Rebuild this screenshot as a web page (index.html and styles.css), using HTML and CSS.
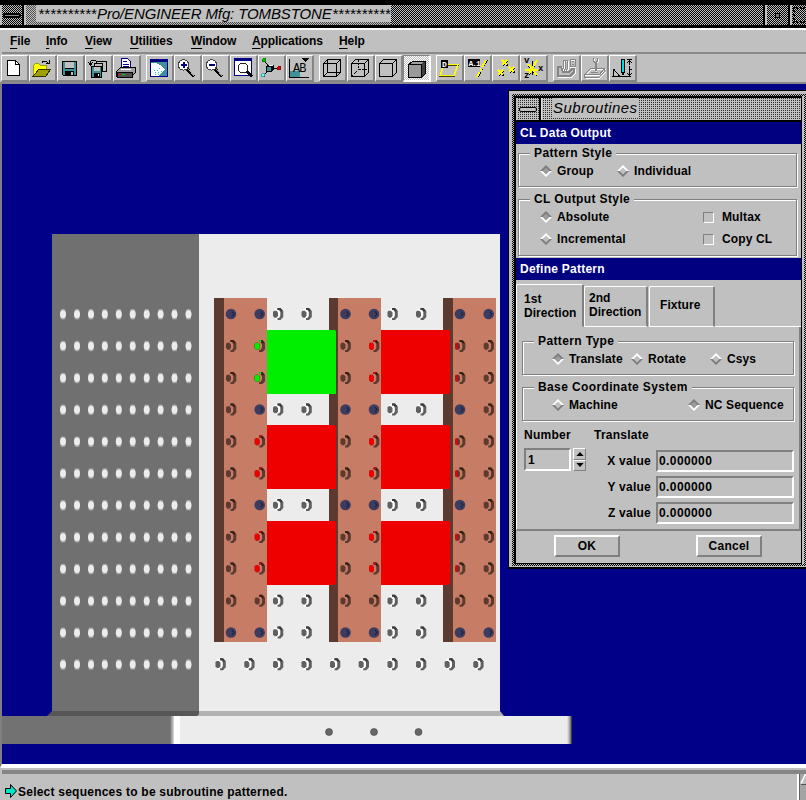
FILE: index.html
```html
<!DOCTYPE html>
<html lang="en">
<head>
<meta charset="utf-8">
<title>Pro/ENGINEER Mfg: TOMBSTONE</title>
<link rel="stylesheet" href="styles.css">
</head>
<body>
<div class="app">
  <header class="titlebar">
    <div class="sysbtn"><span></span></div>
    <div class="spacer"></div>
    <div class="apptitle"><span class="stars">**********</span><span class="name">Pro/ENGINEER Mfg: TOMBSTONE</span><span class="stars">**********</span></div>
    <div class="grip"></div>
    <div class="minbtn"><i></i></div>
    <div class="maxbtn"><i></i></div>
  </header>

  <nav class="menubar">
    <span><u>F</u>ile</span><span><u>I</u>nfo</span><span><u>V</u>iew</span><span><u>U</u>tilities</span><span><u>W</u>indow</span><span><u>A</u>pplications</span><span><u>H</u>elp</span>
  </nav>

  <div class="toolbar">
    <div class="tools">
      <button class="tool"><svg viewBox="1 55 27 27"><path d="M7.500 60.500h8l4 4v11h-12z" fill="#fff" stroke="#000"/><path d="M15.500 60.500v4h4" fill="none" stroke="#000"/></svg></button>
      <button class="tool"><svg viewBox="29 55 27 27"><path d="M33.500 75.500v-10l2-2h3l2 2h6v4" fill="#ff0" stroke="#a0a000"/><path d="M33.500 76l5-6.500h12l-4.500 6.500z" fill="#a0a000" stroke="#303000"/><path d="M41.500 63.500c1-3 5-3 7 0M46 63.500h3.500v-3.500" fill="none" stroke="#000"/></svg></button>
      <button class="tool"><svg viewBox="57 55 27 27"><path d="M62.500 61.500h14v14h-13l-1-1z" fill="#40909c" stroke="#000"/><path d="M65 62h9v6h-9z" fill="#c0c0c0"/><path d="M65 68h9v1h-9zM65 71h9v5h-9z"/><path d="M71 72h2v3h-2z" fill="#c0c0c0"/></svg></button>
      <button class="tool"><svg viewBox="85 55 27 27"><path d="M96.500 61.500h10v10h-10z" fill="#c0c0c0" stroke="#000"/><path d="M94.500 63.500h8v8h-8z" fill="#c0c0c0" stroke="#000"/><path d="M91.500 66.500h10v11h-10z" fill="#40909c" stroke="#000"/><path d="M93.500 67h6v4h-6z" fill="#c0c0c0"/><path d="M93.500 73h6v4h-6z"/><path d="M98 74h1v2h-1z" fill="#fff"/><path d="M95.500 60.500h-3q-2 0-2 2v3M88.500 62.500l2 3 2-3" fill="none" stroke="#000"/></svg></button>
      <button class="tool"><svg viewBox="113 55 27 27"><path d="M121.500 58.500h6l3 3v9h-9z" fill="#fff" stroke="#008"/><path d="M123 61.500h4M123 64.500h6M123 66.500h6" stroke="#008"/><path d="M116.500 71.500l4-4h15v5l-4 4h-15z" fill="#a0a0a0" stroke="#000"/><path d="M117 72h15v5h-15z" fill="#505050" stroke="#000"/><path d="M121 69.500h10" stroke="#fff"/><path d="M119 74h2v1h-2z" fill="#f00"/><path d="M122 74h3v1h-3z" fill="#0d0"/></svg></button>
    </div>
    <div class="tools">
      <button class="tool"><svg viewBox="146 55 27 27"><path d="M150.500 59.500h17v17h-17z" fill="#40909c" stroke="#000080"/><path d="M150 59h18v3h-18z" fill="#000080"/><path d="M151 63h5q7 3 9 7l-7 6h-7z" fill="#fff"/><path d="M154 70.500h1m2 0h1m-3 2h1m2 0h1m-4 2h1m2 0h1m0-6h1m1 3h1" stroke="#0dd"/></svg></button>
      <button class="tool"><svg viewBox="174 55 27 27"><path d="M187 69l7 7.500" stroke="#000" stroke-width="3"/><path d="M187 68l7 7.500" stroke="#aaa"/><circle cx="183.500" cy="65" r="5.200" fill="#fff" stroke="#404040"/><path d="M180.500 64h6v2h-6zM182.500 62h2v6h-2z" fill="#000080"/></svg></button>
      <button class="tool"><svg viewBox="202 55 27 27"><path d="M215 69l7 7.500" stroke="#000" stroke-width="3"/><path d="M215 68l7 7.500" stroke="#aaa"/><circle cx="211.500" cy="65" r="5.200" fill="#fff" stroke="#404040"/><path d="M208.500 64h6v2h-6z" fill="#000080"/></svg></button>
      <button class="tool"><svg viewBox="230 55 27 27"><path d="M234.500 58.500h17v17h-17z" fill="#fff" stroke="#000080"/><path d="M234 58h18v3h-18z" fill="#000080"/><path d="M246 71l6 5.500" stroke="#000" stroke-width="3"/><circle cx="243" cy="68" r="5" fill="#fff" stroke="#202020"/></svg></button>
      <button class="tool"><svg viewBox="258 55 27 27"><path d="M264 61l5 5M264 75l4-4M273 68h5" stroke="#000"/><path d="M266 66.500l2-2h6v5l-2 2h-6z"/><path d="M267 67h4v4h-4z" fill="#40909c"/><path d="M269 65h4l-1 1h-4z" fill="#fff"/><circle cx="264" cy="60" r="2" fill="#0c0" stroke="#040" stroke-width=".5"/><circle cx="279" cy="68" r="2" fill="#e00" stroke="#400" stroke-width=".5"/><circle cx="263" cy="75" r="2" fill="#7ff" stroke="#044" stroke-width=".5"/></svg></button>
      <button class="tool"><svg viewBox="286 55 27 27"><path d="M290 71h10v7h-10z" fill="#40909c"/><path d="M289.500 59v18.500h19" fill="none" stroke="#000"/><path d="M301 58h9l-4.500 4z"/><text x="293" y="72" class="mono ab">AB</text></svg></button>
    </div>
    <div class="tools">
      <button class="tool"><svg viewBox="319 55 27 27"><path d="M323.500 63.500h13v13h-13zM327.500 59.500h13v13h-13zM323.500 63.500l4-4M336.500 63.500l4-4M323.500 76.500l4-4M336.500 76.500l4-4" fill="none" stroke="#000"/></svg></button>
      <button class="tool"><svg viewBox="347 55 27 27"><path d="M351.500 63.500h13v13h-13zM351.500 63.500l4-4h13v13l-4 4M364.500 63.500l4-4" fill="none" stroke="#000"/><path d="M358.500 60v10M358.500 69.500h10M352 76l5-5" fill="none" stroke="#000" stroke-dasharray="2 1"/></svg></button>
      <button class="tool"><svg viewBox="375 55 27 27"><path d="M379.500 63.500h13v13h-13zM379.500 63.500l4-4h13v13l-4 4M392.500 63.500l4-4" fill="none" stroke="#000"/></svg></button>
      <button class="tool pressed"><svg viewBox="403 55 27 27"><path d="M408.500 64.500l4-3h13v12l-4 4z" fill="#404040" stroke="#000"/><path d="M410 64l3-2h11l-3 2z" fill="#a0a0a0"/><path d="M408.500 64.500h13v13h-13z" fill="#999" stroke="#000"/></svg></button>
    </div>
    <div class="tools">
      <button class="tool"><svg viewBox="436 55 27 27"><path d="M444 65.500h14l-4 11h-14z" fill="none" stroke="#404000"/><path d="M444 64.500h14l-4 11h-14z" fill="none" stroke="#ff0" stroke-width="1.500"/><path d="M441 60h7v8h-7z"/><text x="442" y="67" class="mono tag">D</text></svg></button>
      <button class="tool"><svg viewBox="464 55 27 27"><path d="M487 60l-9 17" stroke="#000" stroke-width="1.500" stroke-dasharray="8 2 2 2"/><path d="M486 60l-9 17" stroke="#ff0" stroke-width="2" stroke-dasharray="8 2 2 2"/><path d="M468 59h12v8h-12z"/><text x="468.500" y="66" class="mono tag a1">A.1</text></svg></button>
      <button class="tool"><svg viewBox="492 55 27 27"><path d="M502 60l5 5m0-5l-5 5M498 70l5 5m0-5l-5 5M509 67l5 5m0-5l-5 5" stroke="#000" stroke-width="1.500" transform="translate(.7 .7)"/><path d="M502 60l5 5m0-5l-5 5M498 70l5 5m0-5l-5 5M509 67l5 5m0-5l-5 5" stroke="#ff0" stroke-width="1.600"/></svg></button>
      <button class="tool"><svg viewBox="520 55 27 27"><path d="M525 70.500h13M532.500 61v14M537 61l-8 14M528 65l9 11" stroke="#000" stroke-width="1.200"/><path d="M525 69.500h13M537 60l-8 14M528 64l9 11" stroke="#ff0" stroke-width="2"/><text x="524" y="63" class="mono ax">v</text><text x="524" y="78" class="mono ax">z</text><text x="538" y="71" class="mono ax">x</text></svg></button>
    </div>
    <div class="tools">
      <button class="tool"><svg viewBox="553 55 27 27"><g fill="none" stroke="#fff" transform="translate(1 1)"><path d="M557.500 66.500v10h13l4-4v-4h-3l-2 2h-7v-4z"/><path d="M563.500 60.500h4v8l-2 3-2-3zM569.500 59.500h5v7h-5z"/></g><g fill="none" stroke="#858585"><path d="M558 67v9h12l4-4v-3h-2l-3 3h-6l-2-5z" stroke-width="2"/><path d="M563.500 60.500h4v8l-2 3-2-3zM570.500 59.500h5v7h-5zM572 61.500h2M572 64.500h2M565.500 60v9"/></g></svg></button>
      <button class="tool"><svg viewBox="581 55 27 27"><g fill="none" stroke="#fff" transform="translate(1 1)"><path d="M584.500 74.500l6-6h14l-5 6zM584.500 77.500h14l6-6M593 58v3l2 2 2-2v-3M595.500 63v8"/></g><g fill="none" stroke="#858585"><path d="M584.500 74.500l6-6h14l-5 6zM584.500 77.500h14l6-6v-3M584.500 74v4M593.500 58v3l2 2 2-2v-3M591 72.500h7"/><path d="M595.500 63v8" stroke-width="2"/></g></svg></button>
      <button class="tool"><svg viewBox="609 55 27 27"><path d="M612 76.500h19M613.500 69l6 7M613.500 69v7" fill="none" stroke="#000"/><path d="M621.500 59.500h3v12l-1.500 3-1.500-3z" fill="#0dd" stroke="#000"/><path d="M627 59.500h5M629.500 60v5M629.500 70v6M627.500 63l2-3 2 3M627.500 73l2 3 2-3M629 66v3.500h3" fill="none" stroke="#000"/></svg></button>
    </div>
  </div>

  <main class="canvas">
    <svg class="model" viewBox="2 84 804 680">
      <defs>
        <linearGradient id="edgeL"><stop offset="0" stop-color="#707070"/><stop offset=".35" stop-color="#d0d0d0"/><stop offset=".45" stop-color="#fff"/><stop offset="1" stop-color="#fff"/></linearGradient>
        <linearGradient id="edgeR"><stop offset="0" stop-color="#ececec"/><stop offset=".6" stop-color="#999"/><stop offset="1" stop-color="#222"/></linearGradient>
        <g id="pin"><rect x="-2.500" y="-5" width="5" height="10.500" rx="1.500" fill="#a4a4a4"/><ellipse cy=".2" rx="3" ry="4" fill="#ececec"/></g>
        <g id="pins"><use href="#pin" x="63"/><use href="#pin" x="77"/><use href="#pin" x="91"/><use href="#pin" x="104.800"/><use href="#pin" x="118.800"/><use href="#pin" x="132.700"/><use href="#pin" x="146.700"/><use href="#pin" x="160.600"/><use href="#pin" x="174.500"/><use href="#pin" x="188.500"/></g>
        <path id="dot" d="M-4-3.200H-1.500L0-1.500V2L-1.500 3.700H-3.500L-5 2V-2z"/>
        <path id="arc" d="M-.5-6H2.500L5.300-3V3L2.500 6H-.5V4H1L2.300 2V-2L1-4H-.5z"/>
        <g id="hole"><path d="M-3.500-4.500L0-6L4-4L5.500 0L4 4.500L0 6L-3 5z" fill="#fff"/><use href="#dot" fill="#606060"/><use href="#arc" fill="#606060"/><path d="M-.5-6H2.500L4.500-3.500L3-2.500L1.500-4H-.5z" fill="#3c3c3c"/></g>
        <g id="bore" fill="#5c3a30"><use href="#dot"/><use href="#arc"/><path d="M-.5-6H2.500L4.500-3.500L3-2.500L1.500-4H-.5z" fill="#35201a"/></g>
        <g id="rbore"><use href="#bore"/><use href="#dot" fill="#ee0000"/><path d="M-.5-6h2v2h-2z" fill="#ee0000"/></g>
        <g id="gbore"><use href="#bore"/><use href="#dot" fill="#00ee00"/><path d="M-.5-6h2v2h-2z" fill="#00ee00"/></g>
        <g id="half"><use href="#bore"/><path d="M-4.500-3h2v6.500h-2z" fill="#ee0000"/></g>
        <g id="bolt"><circle r="5.300" fill="#3c3c60"/><path d="M1-2.500l2 2.500-2 2.500" fill="none" stroke="#20203c" stroke-width="1.200"/></g>
        <g id="gaps"><use href="#hole" x="278"/><use href="#hole" x="306.500"/><use href="#hole" x="392.500"/><use href="#hole" x="421"/></g>
        <g id="bolts"><use href="#bolt" x="345.500"/><use href="#bolt" x="374"/><use href="#bolt" x="460"/><use href="#bolt" x="259.700"/></g>
        <g id="mid"><use href="#bore" x="231"/><use href="#bolts"/><use href="#bore" x="488.700"/><use href="#gaps"/></g>
        <g id="part"><use href="#bore" x="231"/><use href="#rbore" x="259.700"/><use href="#bore" x="345.500"/><use href="#rbore" x="374"/><use href="#half" x="460"/><use href="#bore" x="488.700"/></g>
      </defs>
      <path d="M52 234h147v478H52z" fill="#707070"/>
      <path d="M52 711h147v4l-2 1H47z" fill="#575757"/>
      <path d="M199 234h301v478H199z" fill="#ececec"/>
      <path d="M199 711h301l4 5H197l2-2z" fill="#b2b2b2"/>
      <path d="M2 716h168v28H2z" fill="#727272"/>
      <path d="M180 716h388v28H180z" fill="#ececec"/>
      <path d="M170 716h10v28h-10z" fill="url(#edgeL)"/>
      <path d="M567 716h5v28h-5z" fill="url(#edgeR)"/>
      <g fill="#666" stroke="#444" stroke-width=".6"><circle cx="329" cy="732" r="3.500"/><circle cx="374" cy="732" r="3.500"/><circle cx="418.500" cy="732" r="3.500"/></g>
      <path d="M214 298h10v344h-10zM329 298h9v344h-9zM443 298h10v344h-10z" fill="#5c3a30"/>
      <path d="M224 298h43v344h-43zM338 298h43v344h-43zM453 298h43v344h-43z" fill="#c67c65"/>
      <path d="M267 330h68l1 1v63h-69z" fill="#00ee00"/>
      <path d="M381 330h68l1 1v62l-2 1h-67zM267 425h66l3 1v63h-69zM381 425h66l3 1v63h-69zM267 521h68l1 1v62l-3 1h-66zM381 521h68l1 1v62l-3 1h-66z" fill="#ee0000"/>
      <use href="#pins" y="314"/><use href="#pins" y="345.800"/><use href="#pins" y="377.700"/><use href="#pins" y="409.500"/><use href="#pins" y="441.400"/><use href="#pins" y="473.200"/><use href="#pins" y="505.100"/><use href="#pins" y="537"/><use href="#pins" y="568.800"/><use href="#pins" y="600.700"/><use href="#pins" y="632.500"/><use href="#pins" y="664.300"/>
      <use href="#bolts" y="314"/><use href="#bolt" x="231" y="314"/><use href="#bolt" x="488.700" y="314"/><use href="#gaps" y="314"/>
      <use href="#part" y="346"/><use href="#gbore" x="259.700" y="346"/>
      <use href="#part" y="378"/><use href="#gbore" x="259.700" y="378"/>
      <use href="#mid" y="409.500"/>
      <use href="#part" y="441.500"/><use href="#part" y="473.500"/>
      <use href="#mid" y="505"/>
      <use href="#part" y="537"/><use href="#part" y="568.500"/>
      <g><use href="#bore" x="231" y="600.700"/><use href="#bore" x="259.700" y="600.700"/><use href="#bore" x="345.500" y="600.700"/><use href="#bore" x="374" y="600.700"/><use href="#bore" x="460" y="600.700"/><use href="#bore" x="488.700" y="600.700"/><use href="#gaps" y="600.700"/></g>
      <use href="#bolts" y="632.500"/><use href="#bolt" x="231" y="632.500"/><use href="#bolt" x="488.700" y="632.500"/><use href="#gaps" y="632.500"/>
      <g><use href="#gaps" y="664.300"/><use href="#hole" x="220.500" y="664.300"/><use href="#hole" x="249.300" y="664.300"/><use href="#hole" x="335" y="664.300"/><use href="#hole" x="363.700" y="664.300"/><use href="#hole" x="449.700" y="664.300"/><use href="#hole" x="478.300" y="664.300"/></g>
    </svg>
  </main>

  <footer class="status">
    <svg class="arrow" viewBox="0 0 12 14"><path d="M.5 4.500h5v-4l6 6.500-6 6.500v-4h-5z" fill="#00e4c8" stroke="#000"/></svg>
    <span class="msg">Select sequences to be subroutine patterned.</span>
    <div class="scroll"><svg viewBox="0 0 6 28"><path d="M6 1v9H1z" fill="#c0c0c0"/><path d="M1 9.500L5.500 0" stroke="#fff" stroke-width="1.500"/><path d="M1 10.500h5" stroke="#505050"/></svg></div>
  </footer>
</div>

<svg class="defs" width="0" height="0">
  <defs>
    <g id="off"><path d="M6 0l6 6H9.500L6 2.500 2.500 6H0z" fill="#fff"/><path d="M6 12l6-6H9.500L6 9.500 2.500 6H0z" fill="#7c7c7c"/></g>
    <g id="on"><path d="M6 1l5 5-5 5-5-5z" fill="#9c9c9c"/><path d="M6 0l6 6H9.500L6 2.500 2.500 6H0z" fill="#7c7c7c"/><path d="M6 12l6-6H9.500L6 9.500 2.500 6H0z" fill="#fff"/></g>
  </defs>
</svg>

<section class="dialog"><div class="rim"><div class="groovy"><div class="inner">
  <div class="dtitle"><div class="sysbtn small"><span></span></div><div class="dspacer"></div><div class="dname">Subroutines</div></div>
  <h2 class="head">CL Data Output</h2>
  <div class="sec1">
    <div class="group g1"><span class="legend">Pattern Style</span>
      <div class="opts o1"><label><svg><use href="#on"/></svg>Group</label><label><svg><use href="#off"/></svg>Individual</label></div>
    </div>
    <div class="group g2"><span class="legend">CL Output Style</span>
      <div class="opts o2"><label><svg><use href="#on"/></svg>Absolute</label><label><i class="check"></i>Multax</label><label><svg><use href="#off"/></svg>Incremental</label><label><i class="check"></i>Copy CL</label></div>
    </div>
  </div>
  <h2 class="head">Define Pattern</h2>
  <div class="tabs">
    <div class="tab active">1st<br>Direction</div>
    <div class="tab">2nd<br>Direction</div>
    <div class="tab third">Fixture</div>
    <div class="rest"></div>
  </div>
  <div class="pane">
    <div class="group g3"><span class="legend">Pattern Type</span>
      <div class="opts o3"><label><svg><use href="#on"/></svg>Translate</label><label><svg><use href="#off"/></svg>Rotate</label><label><svg><use href="#off"/></svg>Csys</label></div>
    </div>
    <div class="group g4"><span class="legend">Base Coordinate System</span>
      <div class="opts o4"><label><svg><use href="#off"/></svg>Machine</label><label><svg><use href="#on"/></svg>NC Sequence</label></div>
    </div>
    <div class="values">
      <div class="count"><div class="cap">Number</div>
        <div class="spin"><div class="field num">1</div><div class="steps"><span><svg viewBox="0 0 9 5"><path d="M0 5l4.500-5L9 5z"/></svg></span><span><svg viewBox="0 0 9 5"><path d="M0 0l4.500 5L9 0z"/></svg></span></div></div>
      </div>
      <div class="trans"><div class="cap">Translate</div>
        <div class="line"><span>X value</span><div class="field">0.000000</div></div>
        <div class="line"><span>Y value</span><div class="field">0.000000</div></div>
        <div class="line"><span>Z value</span><div class="field">0.000000</div></div>
      </div>
    </div>
  </div>
  <div class="actions"><button>OK</button><button>Cancel</button></div>
</div></div></div></section>
</body>
</html>
```

FILE: styles.css
```css
* { box-sizing: border-box; }
body {
  margin: 0;
  width: 806px;
  height: 800px;
  overflow: hidden;
  position: relative;
  background: #c0c0c0;
  color: #000;
  font: bold 12px "Liberation Sans", sans-serif;
}
svg { display: block; }
.defs { position: absolute; }
button { font: inherit; letter-spacing: inherit; color: inherit; padding: 0; margin: 0; border: 0; border-radius: 0; }
.app { display: flex; flex-direction: column; height: 800px; }

/* window title */
.titlebar {
  display: flex;
  height: 30px;
  flex: none;
  border-top: 5px solid #000;
  border-bottom: 2px solid #fff;
  padding-bottom: 3px;
  background: #000;
  white-space: nowrap;
}
.sysbtn, .grip, .minbtn, .maxbtn { background: repeating-conic-gradient(#000 0 25%, #c0c0c0 0 50%) 0 0 / 2px 2px; }
.sysbtn { width: 24px; border-left: 2px solid #c0c0c0; border-right: 2px solid #000; display: flex; align-items: center; justify-content: center; }
.sysbtn span { width: 18px; height: 5px; border: 2px solid #000; background: #888; border-radius: 2px; }
.spacer { width: 12px; border-left: 2px solid #c0c0c0; background: repeating-conic-gradient(#505050 0 25%, #c0c0c0 0 50%) 0 0 / 2px 2px; }
.apptitle {
  width: 355px;
  padding-left: 2px;
  background: linear-gradient(#c0c0c0, #c0c0c0) 0 0 / 100% 17px no-repeat, repeating-conic-gradient(#404040 0 25%, #c0c0c0 0 50%) 0 0 / 2px 2px;
  font: italic 15px/18px "Liberation Sans", sans-serif;
  display: flex;
}
.stars { width: 59px; }
.name { width: 235px; letter-spacing: -.12px; }
.grip { flex: 1; }
.minbtn, .maxbtn { border-left: 2px solid #c0c0c0; display: flex; align-items: center; justify-content: center; }
.minbtn { width: 25px; border-right: 2px solid #000; box-shadow: -2px 0 0 #000; }
.minbtn i { width: 5px; height: 5px; border: 1px solid #000; background: #777; }
.maxbtn { width: 16px; }
.maxbtn i { width: 12px; height: 16px; border: 2px dotted #000; border-right: 0; }

/* menus */
.menubar {
  display: grid;
  grid-template-columns: 36px 39px 45px 61px 61px 87px auto;
  height: 24px;
  flex: none;
  margin-left: 2px;
  padding-left: 8px;
  line-height: 22px;
  border-bottom: 2px solid #8a8a8a;
  letter-spacing: -.1px;
}
.menubar u { text-decoration-thickness: 1px; text-underline-offset: 3px; }

/* toolbar */
.toolbar {
  display: flex;
  gap: 5px;
  height: 30px;
  flex: none;
  padding: 1px 0 0 1px;
  border-bottom: 2px solid #8a8a8a;
}
.tools { display: flex; }
.tool {
  width: 28px;
  height: 27px;
  background: #c0c0c0;
  border: solid;
  border-width: 1px 2px 2px 1px;
  border-color: #fff #858585 #858585 #fff;
}
.tools .tool svg { width: 27px; height: 27px; margin: -1px -1px; }
.tool svg { shape-rendering: crispEdges; }
.tool.pressed { border-color: #858585 #fff #fff #858585; background: repeating-conic-gradient(#c0c0c0 0 25%, #fff 0 50%) 0 0 / 2px 2px; }
.mono { font: 12px "Liberation Mono", monospace; letter-spacing: -1px; }
.tag { font-size: 8px; font-weight: bold; fill: #fff; letter-spacing: 0; }
.a1 { letter-spacing: -1px; }
.ax { font-size: 9px; font-weight: bold; letter-spacing: 0; }

/* graphics area */
.canvas { flex: none; height: 684px; border-left: 2px solid #808080; border-bottom: 4px solid #fff; background: #000088; }
.model { width: 804px; height: 680px; }

.status {
  flex: 1;
  display: flex;
  margin: 2px 0 0 2px;
  border-top: 4px solid #858585;
  background: #c0c0c0;
  padding-left: 3px;
}
.arrow { width: 12px; height: 14px; margin-top: 10px; }
.msg { flex: 1; padding: 10px 0 0 1px; line-height: 16px; letter-spacing: .23px; }
.scroll { width: 9px; border-left: 2px solid #fff; box-shadow: inset 1px 0 0 #606060; background: #a4a4a4; padding-left: 1px; }
.scroll svg { width: 6px; height: 28px; }

/* dialog frame */
.dialog {
  position: absolute;
  left: 508px;
  top: 90px;
  width: 298px;
  height: 479px;
  border: solid #000;
  border-width: 1px 0 2px 1px;
  letter-spacing: .25px;
}
.rim { height: 100%; background: #c0c0c0; padding: 3px 0 1px 3px; }
.groovy { height: 100%; padding: 2px; background: repeating-conic-gradient(#000 0 25%, #c0c0c0 0 50%) 0 0 / 2px 2px; }
.inner { height: 100%; border: solid #000; border-width: 2px 1px 1px 2px; box-shadow: 2px 0 0 #c0c0c0; width: 288px; background: #c0c0c0; }
.dtitle {
  display: flex;
  height: 24px;
  border-bottom: 2px solid #000;
  background: conic-gradient(#303030 25%, #c0c0c0 0) 0 0 / 2px 2px;
}
.sysbtn.small { width: 25px; background: conic-gradient(#303030 25%, #c0c0c0 0) 0 0 / 2px 2px; border-left-width: 1px; }
.small span { background: #c0c0c0; border-width: 1px; }
.dspacer { width: 12px; border-left: 1px solid #e0e0e0; }
.dname { background: #c0c0c0; height: 19px; width: 86px; font: italic 15px/19px "Liberation Sans", sans-serif; letter-spacing: .4px; }
.head { margin: 0; height: 22px; padding-left: 4px; background: #000080; color: #fff; font: inherit; line-height: 22px; }

/* framed groups */
.group { border: 1px solid #808080; box-shadow: 1px 1px 0 #fff, inset 1px 1px 0 #fff; letter-spacing: .12px; }
.legend { display: block; width: max-content; height: 16px; line-height: 16px; margin: -9px 0 0 11px; padding: 0 4px; background: #c0c0c0; letter-spacing: .38px; }
.opts { display: grid; }
.opts label { display: flex; align-items: center; height: 16px; white-space: nowrap; }
.opts svg { width: 12px; height: 12px; margin-right: 5px; }
.check { width: 11px; height: 11px; margin-right: 8px; border: 1px solid; border-color: #808080 #fff #fff #808080; }
.sec1 { height: 114px; padding: 9px 4px 0 2px; display: flex; flex-direction: column; gap: 12px; }
.g1 { height: 34px; }
.g2 { height: 57px; }
.o1 { grid-template-columns: 77px auto; padding: 2px 0 0 21px; }
.o2 { grid-template-columns: 163px auto; padding: 2px 0 0 21px; row-gap: 6px; }
.g3, .g4 { height: 34px; }
.o3 { grid-template-columns: 79px 79px auto; padding: 2px 0 0 29px; }
.o4 { grid-template-columns: 136px auto; padding: 2px 0 0 29px; }

.tabs { display: flex; height: 47px; padding-top: 4px; line-height: 14px; white-space: nowrap; }
.tab { width: 64px; margin-top: 2px; padding: 4px 0 0 4px; border: solid; border-width: 1px 2px 1px 1px; border-color: #fff #808080 #fff #fff; border-radius: 2px 2px 0 0; letter-spacing: .05px; }
.tab.active { width: 68px; margin: 0; padding: 7px 0 0 7px; border-bottom-color: #c0c0c0; }
.tab.third { width: 66px; margin-left: 1px; padding: 11px 0 0 10px; }
.rest { flex: 1; border-bottom: 1px solid #fff; }

.pane { height: 204px; border: solid; border-width: 0 2px 2px 1px; border-color: #808080 #808080 #808080 #fff; padding: 14px 5px 0 5px; }
.g4 { margin-top: 12px; }
.values { display: flex; margin-top: 6px; }
.cap { height: 16px; line-height: 16px; }
.count { width: 70px; padding-left: 2px; }
.spin { display: flex; gap: 2px; margin-top: 5px; }
.field { height: 22px; border: 2px solid; border-color: #808080 #fff #fff #808080; padding-left: 1px; line-height: 18px; letter-spacing: .4px; }
.num { width: 47px; height: 23px; padding-left: 2px; line-height: 20px; }
.steps { width: 13px; height: 23px; display: flex; flex-direction: column; }
.steps span { flex: 1; display: flex; align-items: center; justify-content: center; border: 1px solid; border-color: #fff #808080 #808080 #fff; }
.steps svg { width: 8px; height: 4px; }
.trans { flex: 1; padding-left: 2px; }
.trans .cap { margin-bottom: 7px; }
.line { display: flex; height: 26px; line-height: 22px; }
.line span { width: 62px; padding-right: 5px; text-align: right; }
.line .field { flex: 1; }

.actions { display: flex; gap: 76px; padding: 4px 0 0 38px; }
.actions button { width: 66px; height: 22px; background: #c0c0c0; border: solid; border-width: 2px; border-color: #fff #808080 #808080 #fff; }
```
